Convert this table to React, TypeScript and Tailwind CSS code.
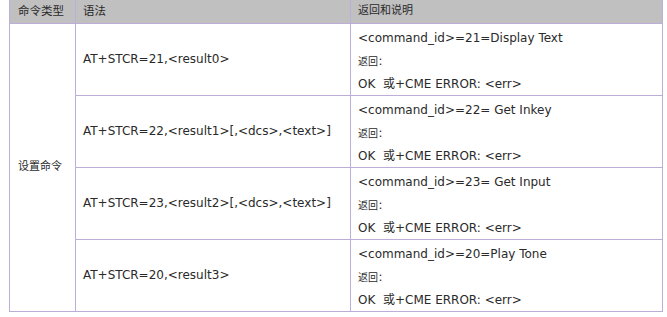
const rows = [
  { syntax: 'AT+STCR=21,<result0>', id: '<command_id>=21=Display Text' },
  { syntax: 'AT+STCR=22,<result1>[,<dcs>,<text>]', id: '<command_id>=22= Get Inkey' },
  { syntax: 'AT+STCR=23,<result2>[,<dcs>,<text>]', id: '<command_id>=23= Get Input' },
  { syntax: 'AT+STCR=20,<result3>', id: '<command_id>=20=Play Tone' },
];

const font = "font-['DejaVu_Sans','Noto_Sans_CJK_SC',sans-serif]";

export default function App() {
  return (
    <div className={`bg-white w-[667px] h-[317px] pl-[9px] ${font} text-[#2a2a2a]`}>
      <table className="border-collapse table-fixed w-[653px]">
        <colgroup>
          <col className="w-[66px]" />
          <col className="w-[275px]" />
          <col className="w-[312px]" />
        </colgroup>
        <thead>
          <tr className="bg-[#c0c0c0] h-[23px] text-[11.5px]">
            <th className="border border-t-0 border-[#bcaed8] font-normal text-left pl-[8px] align-middle">命令类型</th>
            <th className="border border-t-0 border-[#bcaed8] font-normal text-left pl-[7px] align-middle">语法</th>
            <th className="border border-t-0 border-[#bcaed8] font-normal text-left pl-[7px] align-middle text-[11px]">返回和说明</th>
          </tr>
        </thead>
        <tbody>
          {rows.map((r, i) => (
            <tr key={i} className="h-[72px]">
              {i === 0 && (
                <td rowSpan={4} className="border border-[#bcaed8] pl-[8px] text-[11px] align-middle">
                  设置命令
                </td>
              )}
              <td className="border border-[#bcaed8] pl-[7px] text-[12px] align-middle">{r.syntax}</td>
              <td className="border border-[#bcaed8] pl-[7px] align-top pt-[3px]">
                <div className="flex flex-col">
                  <div className="h-[23px] leading-[23px] text-[12px]">{r.id}</div>
                  <div className="h-[23px] leading-[23px] text-[10px]">返回：</div>
                  <div className="h-[22px] leading-[22px] text-[12px]">OK&nbsp; 或+CME ERROR: &lt;err&gt;</div>
                </div>
              </td>
            </tr>
          ))}
        </tbody>
      </table>
    </div>
  );
}
